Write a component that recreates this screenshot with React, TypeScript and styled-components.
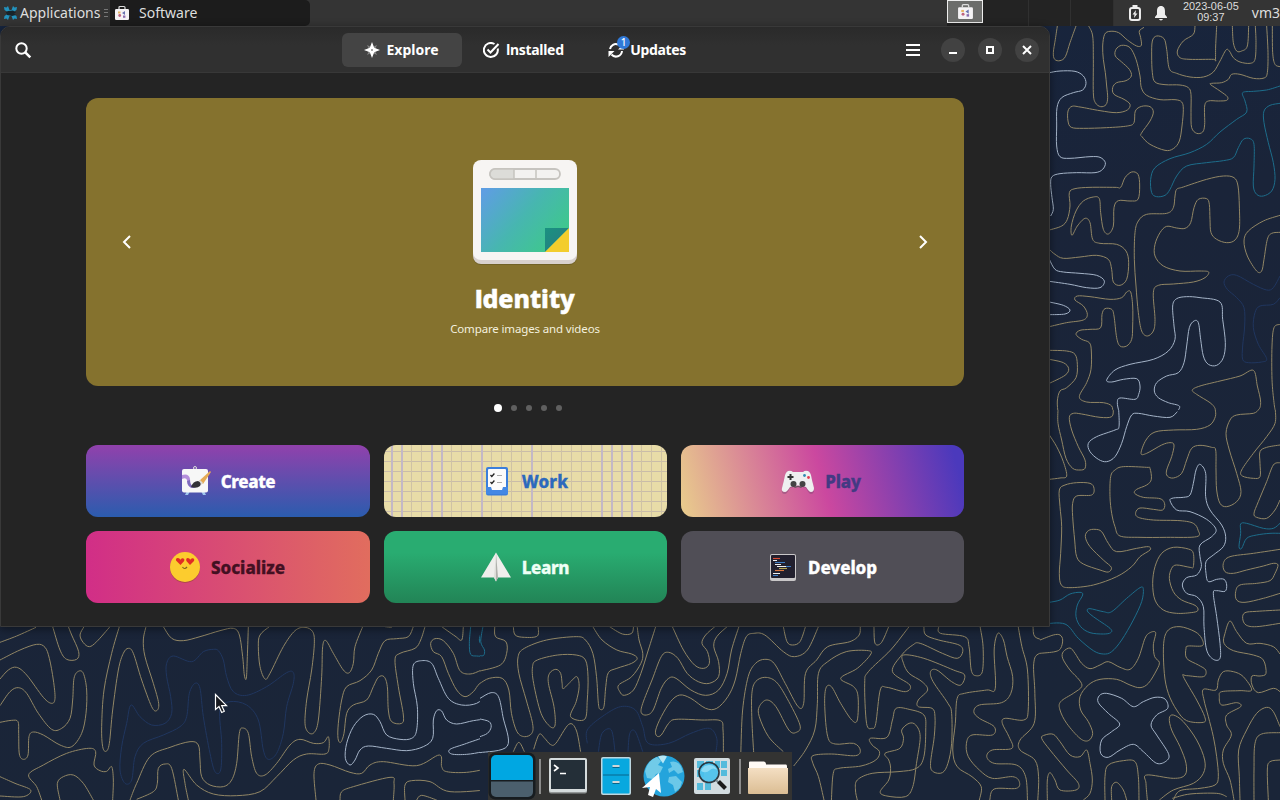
import React from "react";
import styled, { createGlobalStyle } from "styled-components";

const Global = createGlobalStyle`
  * { box-sizing: border-box; }
  html, body { margin: 0; padding: 0; background: #1a2439; overflow: hidden; }
  body { font-family: "Noto Sans", "Open Sans", sans-serif; }
`;

/* ---------- Wallpaper ---------- */

type Tone = "gold" | "white" | "teal" | "blue";
const tones: Record<Tone, string> = {
  gold: "#918665",
  white: "#a5b4c8",
  teal: "#1d6d8b",
  blue: "#20365f",
};

interface Region {
  x: number;
  y: number;
  width: number;
  height: number;
  scaleX: number;
  scaleY: number;
  lines: Partial<Record<Tone, string[]>>;
}

const regions: Region[] = [
  {
    x: 1040, y: 26, width: 240, height: 384, scaleX: 3, scaleY: 3,
    lines: {
      gold: [
        "52,0 46,40 40,80 44,100 60,104 76,92 90,50 108,0",
        "146,0 158,30 160,100 160,200 166,230 182,242 198,236 203,215 200,180 196,140 190,100 188,60 194,25 210,16 236,20 262,42 290,60 304,58 302,35 298,15 312,4",
        "245,58 228,70 226,90 245,108 268,130 274,150 258,164 230,170 218,185 222,205 252,220 270,235 262,252 230,260 180,254 120,243 96,241 84,255 84,285 94,304 130,307 200,305 262,300 282,290 286,255 305,241 330,242 340,258 330,285 304,322 306,332 330,355 375,373 400,368 418,345 426,300 430,250 425,228 405,221 360,221 320,208 304,185 300,150 288,100 270,65 245,58",
        "680,0 684,80 682,140 672,156 640,157 600,145 575,145 565,160 545,170 515,172 512,176 540,195 562,212 560,223 535,225 505,225 494,240 494,295 488,318 470,322 455,305 453,260 453,205 445,185 420,177 375,176 345,168 337,140 335,90 337,45 350,30 372,38 380,70 388,128 410,142 450,153 490,153 520,138 540,105 558,72 568,75 580,95 600,108 630,112 645,100 648,50 646,0",
        "465,0 460,25 430,45 412,75 420,95 450,100 520,100 526,103 527,60 530,0",
        "577,0 580,50 590,75 605,75 622,60 626,0",
        "697,0 698,80 705,115 720,122",
        "28,612 65,600 82,580 90,540 88,500 105,488 150,484 225,484 242,484 255,455 275,438 294,445 299,480 294,520 270,525 235,524 222,545 220,600 205,624 190,610 182,560 178,518 160,513 130,525 108,555 94,600 96,628 112,600 135,577 150,590 158,640 180,652 230,655 258,675 266,710 260,760 240,778 220,768 215,730 205,700 170,688 120,693 70,697 45,685 28,670",
        "28,902 80,890 130,882 142,865 130,840 105,822 112,810 150,812 210,820 245,815 260,798 272,798 278,840 278,900 275,940 260,960 240,960 230,935 222,870 215,850 195,848 186,865 182,905 150,910 120,913 108,925 125,940 148,950 154,975 153,1030 140,1070 118,1112 140,1128 190,1130 215,1140 218,1160",
        "28,973 80,975 105,985 112,1015 108,1055 80,1085 60,1095 52,1125 54,1160",
        "28,1000 70,1010 86,1028 75,1048 28,1072",
        "320,565 295,585 285,620 283,700 288,780 295,860 305,915 322,930 340,915 345,880 340,800 355,778 400,774 460,768 495,755 506,738 480,735 420,735 370,720 345,690 345,655 360,620 380,601 410,606 435,607 452,590 462,545 475,520 500,518 508,535 510,580 513,620 530,640 560,650 585,642 598,610 598,540 594,480 582,455 550,450 500,460 430,483 410,490 405,510 400,545 380,562 320,565",
        "720,568 670,585 625,615 612,645 622,690 650,735 665,735 672,700 682,640 695,622 720,619",
        "720,895 702,905 696,960 696,1060 702,1130 706,1155",
        "526,1155 524,1145 510,1130 470,1105 457,1092 480,1080 540,1065 600,1050 640,1033 652,1080 662,1130 650,1155 600,1163",
      ],
      white: [
        "28,140 60,135 105,136 130,150 138,172 128,192 100,200 65,215 51,245 50,300 50,360 60,392 90,397 150,392 180,394 196,410 188,430 165,440 110,440 60,443 36,452 32,475 36,515 40,550 32,570",
        "28,700 45,730 70,738 120,742 170,748 193,765 180,785 140,785 90,775 28,766",
        "28,828 70,838 90,852 75,864 28,866",
        "236,1154 232,1130 240,1116 285,1120 296,1105 300,1080 290,1058 250,1060 215,1068 200,1062 225,1032 270,1015 340,1000 385,975 405,940 402,900 398,840 410,818 440,812 480,815 540,828 548,880 556,950 550,995 530,1018 505,1015 490,990 482,940 475,890 462,885 448,905 440,960 432,1010 415,1040 380,1050 350,1070 343,1095 355,1115 385,1130 418,1140 412,1157",
      ],
      teal: [
        "720,180 680,192 640,196 608,200 615,225 620,258 590,280 540,318 500,355 450,380 390,398 345,425 332,460 335,500 350,512 375,508 390,490 410,450 440,420 500,410 550,404 580,395 595,365 610,340 630,338 642,355 642,420 640,480 650,505 670,510 695,495 705,460 700,410 685,350 672,290 672,255 690,238 720,232",
      ],
      blue: [
        "720,750 700,785 680,792 640,775 590,748 565,750 552,768 562,790 590,815 612,845 614,900 608,960 608,1000 625,1010 665,1008 680,998 655,955 640,905 645,860 660,840 700,835 720,815",
      ],
    },
  },
  {
    x: 1040, y: 410, width: 240, height: 390, scaleX: 3, scaleY: 3,
    lines: {
      gold: [
        "220,-2 215,20 180,22 125,12 100,10 88,22 95,60 115,110 135,150 135,175 120,180 98,175 78,145 65,90 54,40 54,-2",
        "28,75 50,110 70,155 80,198 60,204 28,208",
        "526,0 526,20 510,45 470,58 400,60 345,66 318,90 303,130 320,130 365,105 390,98 402,105 395,140 380,180 382,198 400,204 425,190 440,150 455,115 480,106 515,112 527,120 528,180 530,240 540,280 560,290 590,275 603,245 590,190 568,120 558,70 570,30 590,15 640,10 655,0",
        "706,0 705,40 680,80 640,130 605,180 607,198 640,205 660,200 660,160 660,125 680,112 720,105",
        "720,158 700,165 680,215 655,275 642,310 650,322 680,325 705,300 720,270",
        "250,170 225,180 212,200 210,260 215,310 225,350 240,378 300,382 380,382 470,380 474,360 460,340 420,332 340,330 295,322 287,308 300,294 340,298 368,300 374,282 360,266 310,262 284,250 290,238 320,225 334,208 330,175 320,172 250,170",
        "110,218 75,225 58,240 60,290 65,350 62,430 58,490 64,525 90,533 160,525 230,500 275,470 300,440 330,420 325,410 290,415 230,425 205,400 185,365 165,358 145,362 136,380 150,410 190,450 214,472 205,486 180,480 130,462 110,440 104,390 98,320 98,280 110,258 155,255 162,235 150,220 110,218",
        "720,418 640,430 570,440 550,460 555,485 580,490 620,480 670,468 700,460 714,465 705,490 690,512 650,520 600,525 587,545 590,570 615,577 670,565 720,550",
        "720,600 650,604 615,608 608,625 618,645 650,650 720,640",
        "400,412 365,430 345,470 338,520 345,570 370,600 410,610 460,607 474,600 465,586 425,570 400,545 388,505 395,475 410,465 450,472 460,470 460,430 445,417 400,412",
        "0,690 40,675 60,675 68,690 62,715 45,725 0,730",
        "90,714 70,725 68,745 90,780 118,810 125,830 100,850 62,875 60,900 80,940 120,985 145,992 158,970 145,935 122,900 120,860 145,825 180,808 230,808 270,825 300,833 325,820 350,780 358,757 344,740 340,705 347,668 330,668 315,685 295,745 270,778 240,772 205,755 180,765 150,776 125,760 105,730 90,714",
        "420,650 385,660 371,700 373,790 385,850 410,900 440,932 490,937 494,920 470,870 430,800 440,797 490,800 497,780 475,765 440,745 438,715 445,708 487,707 485,685 465,665 420,650",
        "720,845 700,835 655,848 636,825 636,798 660,798 678,790 670,750 640,735 580,722 552,700 555,670 570,633 590,665 620,700 660,700 700,710 720,732",
        "400,1170 420,1142 480,1135 525,1125 535,1100 530,1040 520,980 505,920 492,870 490,838 528,840 535,810 550,785 580,785 610,800 635,840 600,842 545,845 538,860 545,885 590,878 602,890 560,915 560,945 574,975 550,1020 550,1060 570,1110 582,1170",
        "600,1170 598,1100 596,1020 620,960 650,910 680,892 700,905 720,950",
        "642,1170 642,1080 645,1000 665,972 720,968",
        "685,1170 682,1080 690,1055 720,1050",
        "322,1170 318,1120 320,1095 400,1105 435,1095 438,1060 420,1010 395,960 388,925 400,915 430,935 470,990 494,1050 490,1090 460,1120 400,1140 358,1170",
        "22,1170 22,1110 30,1088 45,1110 60,1140 108,1140 115,1120 80,1080 30,1020 5,985 15,975 40,973 60,995 90,1035 120,1040 140,1020 150,1060 157,1110 150,1150 130,1170",
        "195,1170 195,1100 205,1065 250,1052 285,1055 295,1100 297,1170",
        "215,1170 215,1130 230,1117 250,1140 260,1170",
        "397,1165 450,1152 530,1150 560,1160",
      ],
      white: [
        "236,-2 237,50 225,60 170,80 145,100 150,125 175,148 200,155 225,140 245,100 260,50 275,15 295,10 340,18 390,22 412,5",
        "480,163 468,180 460,220 450,255 430,262 400,264 390,272 410,300 450,305 500,328 528,358 515,380 480,405 480,440 484,470 470,495 440,503 427,525 440,550 470,560 490,590 492,650 500,720 520,748 540,745 540,700 530,620 520,550 530,542 555,544 560,525 552,508 530,508 505,515 498,490 498,455 520,435 550,410 557,380 545,345 510,300 497,260 497,190 480,163",
        "200,850 178,857 175,878 205,910 239,942 215,965 185,990 182,1030 205,1042 240,1020 280,1003 310,1025 350,1060 380,1052 385,1030 350,975 333,945 350,915 383,895 375,867 345,862 310,875 280,890 245,865 200,850",
      ],
      teal: [
        "720,340 700,355 670,355 620,340 602,342 602,370 597,410 605,415 620,385 650,375 690,370 720,370",
        "28,577 60,570 90,552 120,547 128,555 112,585 108,620 122,650 150,668 190,672 212,668 210,655 160,620 142,603 150,596 190,605 215,605 260,565 300,533 310,538 305,575 280,630 245,690 215,725 190,732 160,722 115,685 75,642 10,642",
      ],
    },
  },
  {
    x: 0, y: 610, width: 480, height: 190, scaleX: 3, scaleY: 3,
    lines: {
      gold: [
        "0,97 50,78 108,52",
        "0,150 60,120 110,103 135,112 148,145 160,210 165,265 155,280 130,262 80,195 50,172 25,180 0,207",
        "0,287 30,245 55,233 80,250 115,310 155,358 185,355 210,325 218,270 222,205 235,184 250,190 260,240 258,310 245,370 215,410 180,405 130,375 100,366 87,380 84,435 70,448 58,432 56,370 54,335 35,331 0,337",
        "158,50 180,120 200,148 230,148 236,125 215,75 205,50",
        "252,50 240,75 250,98 268,110 290,95 330,50",
        "358,50 335,130 312,240 305,350 308,410 318,424 328,400 338,300 355,180 370,130 385,115 400,130 425,210 455,290 470,302 476,280 460,220 435,140 430,90 438,50",
        "490,50 515,85 550,92 600,80 660,62 700,55 718,75 728,140 733,195 739,205 742,140 745,50",
        "808,50 780,75 775,110 780,170 795,207 810,190 850,110 885,62 915,52 938,65 943,100 935,180 920,270 915,340 925,367 942,368 955,330 965,200 968,110 978,92 1000,130 1030,180 1048,188 1060,160 1065,110 1088,50",
        "1155,50 1175,52",
        "1240,50 1225,80 1190,86 1155,92 1135,130 1115,180 1080,212 1040,230 1025,270 1015,340 1014,385 1022,397 1032,370 1040,310 1060,285 1100,270 1120,230 1135,202 1152,200 1162,230 1165,300 1175,335 1205,340 1210,315 1195,230 1185,150 1200,130 1245,115 1262,90 1275,50",
        "1325,50 1365,78 1385,90 1390,50",
        "1500,155 1445,180 1410,192 1380,182 1360,130 1330,92 1305,86 1292,100 1300,125 1325,140 1345,190 1370,240 1395,260 1420,245 1440,220 1480,202 1508,205",
        "125,570 110,530 86,494 130,465 200,430 265,415 287,425 282,465 300,482 320,484 335,470 340,510 338,570",
        "180,570 172,520 190,500 220,495 250,520 280,570",
        "0,500 45,520 92,540 70,560 0,558",
        "390,570 410,520 450,440 510,412 570,395 595,405 600,450 605,500 630,525 670,530 695,510 710,460 718,370 728,354 745,370 755,440 770,490 795,495 830,460 870,405 900,388 940,400 970,398 985,380 987,415 975,432 920,432 880,450 830,500 780,545 710,557 640,552 590,525 552,478 555,520 565,570",
        "410,568 460,545 472,520 475,475 495,462 515,475 535,570",
        "948,570 942,490 955,462 990,465 1050,487 1085,490 1110,465 1150,455 1250,467 1318,435 1325,470 1340,485 1400,487 1470,475",
        "1020,570 1025,545 1060,530 1170,502 1182,520 1180,570",
        "1215,570 1215,525 1235,512 1290,515 1350,545 1480,538",
        "1250,570 1265,556 1310,570",
      ],
      white: [
        "1500,255 1480,245 1460,255 1430,280 1385,285 1345,265 1315,205 1295,160 1265,152 1240,165 1240,220 1252,290 1250,360 1235,385 1200,388 1160,375 1140,335 1120,313 1090,318 1060,350 1040,400 1036,445 1050,465 1065,450 1080,420 1105,408 1160,415 1220,422 1270,410 1298,385 1300,330 1310,302 1325,303 1340,330 1370,342 1420,332 1455,330 1475,350 1465,375 1400,400 1350,418 1355,432 1400,433 1450,425 1520,410",
      ],
      teal: ["1412,50 1408,100 1412,133 1430,138 1452,136 1450,115 1438,90 1450,50"],
      blue: [
        "640,118 610,125 575,155 520,138 500,160 500,200 512,260 515,310 495,340 455,345 420,320 393,285 380,340 365,410 360,480 375,520 395,510 405,440 430,400 490,375 540,350 560,320 568,250 585,220 600,235 610,320 630,430 645,485 662,480 665,400 660,300 690,275 740,285 775,330 790,420 805,448 830,430 850,370 860,290 880,220 880,188 860,188 800,230 740,256 700,245 680,200 670,150 655,122 640,118",
      ],
    },
  },
  {
    x: 480, y: 610, width: 560, height: 190, scaleX: 2.7034, scaleY: 3,
    lines: {
      gold: [
        "40,48 42,80 70,95 72,130 55,165 0,183",
        "90,48 95,75 120,82 155,78 157,48",
        "0,220 25,205 60,205 78,240 85,310 100,365 120,380 140,370 142,340 125,270 105,190 103,140 120,115 180,90 260,80 285,90 305,130 315,200 320,280 325,298 335,290 340,230 347,188 370,175 410,160 425,145 410,132 370,120 330,90 305,50",
        "245,320 283,328 290,270 292,200 285,150 260,135 210,135 155,150 142,170 145,220 165,310 190,350 203,345 200,290 185,220 188,190 205,178 218,190 222,220 225,236 245,215 262,200 268,230 260,275 245,320",
        "350,50 385,72 410,70 415,50",
        "425,50 430,90 440,130 435,160 410,200 375,225 378,245 390,256 415,240 435,190 455,120 475,50",
        "520,50 550,120 580,165 605,175 620,160 615,125 600,100 610,75 635,50",
        "668,50 640,80 632,110 645,155 645,200 620,220 590,215 560,190 535,145 510,127 490,140 465,210 440,280 436,308 450,315 468,300 490,235 510,205 530,205 570,240 610,256 645,240 668,190 680,120 700,50",
        "915,50 885,120 850,140 820,125 770,75 740,70 720,80 705,130 690,210 670,260 640,295 610,295 570,265 540,255 515,275 490,320 475,360 478,378 490,375 510,340 530,328 600,330 650,332 657,360 658,430",
        "820,50 830,95 845,105 865,95 880,50",
        "705,430 710,300 725,200 745,160 770,148 795,160 825,220 860,290 875,280 880,190 910,150 940,110 1000,95 1025,75 1028,50",
        "740,430 735,330 735,250 745,215 770,202 800,215 830,265 865,345 855,367 835,360 800,290 775,270 755,290 755,320 780,380 820,425",
        "848,468 880,420 905,360 912,280 915,190 940,155 990,125 1050,122 1055,135 1020,175 975,205 1010,230 1022,260 1020,330 1005,330 975,280 950,230 935,235 932,290 940,380 960,402 1010,400 1028,420 1015,437 950,432 900,437 900,460 915,500 930,570",
        "1160,50 1110,120 1050,185 1040,220 1045,340 1060,355 1070,340 1082,240 1100,232 1150,245 1162,225 1115,185 1140,135 1170,105 1190,100 1250,130 1290,145 1305,125 1295,105 1240,90 1205,75 1200,50",
        "1065,50 1068,100 1085,98 1105,50",
        "1240,50 1245,70 1310,80 1322,110 1328,180 1340,197 1358,185 1360,110 1352,50",
        "1145,135 1200,145 1280,180 1310,195 1300,225 1275,215 1235,180 1218,185 1225,215 1265,280 1275,310 1275,400 1265,460 1250,488 1225,485 1218,460 1228,380 1230,320 1222,295 1185,290 1185,270 1210,240 1195,215 1160,190 1145,160 1145,135",
        "950,570 955,490 970,475 1030,468 1070,450 1080,425 1060,405 1055,385 1100,382 1115,330 1125,295 1160,298 1200,315 1205,360 1200,440 1180,475 1130,485 1060,490 1020,510 1015,540 1020,570",
        "1160,340 1140,360 1145,385 1135,415 1095,430 1105,450 1110,475 1105,510 1082,545 1100,558 1150,560 1170,530 1180,460 1190,380 1178,345 1160,340",
        "1350,570 1355,530 1330,500 1290,470 1278,420 1285,340 1290,265 1310,250 1370,240 1393,235 1390,120 1400,70 1415,90 1425,140 1440,200 1435,250 1410,278 1350,285 1335,305 1350,325 1390,350 1385,375 1330,375 1315,400 1320,440 1350,480 1385,505 1440,500 1458,515 1450,535 1390,537 1378,570",
        "1480,570 1475,500 1450,465 1390,460 1370,440 1385,420 1438,415 1430,380 1412,340 1420,325 1470,330 1482,300 1480,180 1465,110 1455,50",
        "1568,122 1513,130 1497,160 1500,250 1498,340 1460,390 1460,420 1500,450 1510,500 1508,570",
        "1495,50 1500,80 1530,90 1568,85",
        "90,425 105,397 120,425",
        "145,418 160,373 175,385 190,403 205,400 240,343 260,360 272,425",
      ],
      white: [
        "0,265 30,248 50,260 62,320 74,408 0,428",
        "0,327 25,335 30,352 20,370 0,380",
      ],
      teal: ["8,50 2,95 12,120 10,136 0,137"],
      blue: [
        "290,400 290,360 330,320 380,290 420,300 440,350 455,400 510,400 570,370 620,355 640,385 638,425",
        "320,425 330,370 355,360 365,425",
        "400,425 405,370 420,365 440,425",
      ],
    },
  },
];

/* Catmull-Rom spline through "x,y x,y ..." points; closes when the ends meet. */
function smooth(source: string): string {
  const p = source.split(" ").map((pair) => pair.split(",").map(Number));
  const last = p.length - 1;
  const closed = p[0][0] === p[last][0] && p[0][1] === p[last][1];
  let d = `M${p[0][0]} ${p[0][1]}`;
  for (let i = 0; i < last; i++) {
    const a = i > 0 ? p[i - 1] : closed ? p[last - 1] : p[0];
    const b = p[i];
    const c = p[i + 1];
    const e = i + 2 <= last ? p[i + 2] : closed ? p[1] : c;
    const k = 6;
    d += `C${b[0] + (c[0] - a[0]) / k} ${b[1] + (c[1] - a[1]) / k} ${c[0] - (e[0] - b[0]) / k} ${c[1] - (e[1] - b[1]) / k} ${c[0]} ${c[1]}`;
  }
  return d;
}

const WallpaperSvg = styled.svg`
  position: absolute;
  inset: 0;
`;

const Wallpaper = () => (
  <WallpaperSvg width="1280" height="800" viewBox="0 0 1280 800" fill="none">
    <defs>
      <linearGradient id="night" x1="0" y1="0" x2="0.2" y2="1">
        <stop offset="0" stopColor="#16253f" />
        <stop offset="0.4" stopColor="#1a2439" />
        <stop offset="1" stopColor="#1a2538" />
      </linearGradient>
      {regions.map((r, i) => (
        <clipPath key={i} id={`region-${i}`}>
          <rect x={r.x} y={r.y} width={r.width} height={r.height} />
        </clipPath>
      ))}
    </defs>
    <rect width="1280" height="800" fill="url(#night)" />
    {regions.map((r, i) => (
      <g key={i} clipPath={`url(#region-${i})`}>
        <g transform={`translate(${r.x} ${r.y}) scale(${1 / r.scaleX} ${1 / r.scaleY})`}>
          {(Object.keys(r.lines) as Tone[]).map((tone) => (
            <g key={tone} stroke={tones[tone]}>
              {r.lines[tone]!.map((line) => (
                <path key={line} d={smooth(line)} strokeWidth="1" vectorEffect="non-scaling-stroke" />
              ))}
            </g>
          ))}
        </g>
      </g>
    ))}
  </WallpaperSvg>
);

/* ---------- Desktop and top panel ---------- */

const Desktop = styled.main`
  position: relative;
  width: 1280px;
  height: 800px;
  overflow: hidden;
  display: flex;
  flex-direction: column;
`;

const Panel = styled.header`
  position: relative;
  display: flex;
  align-items: stretch;
  height: 26px;
  background: #343434;
  color: #dedede;
  font-size: 14px;
  overflow: hidden;
  white-space: nowrap;
`;

const AppMenu = styled.div`
  display: flex;
  align-items: center;
  gap: 2px;
  width: 110px;
  padding-left: 3px;
`;

const PanelText = styled.span`
  line-height: 26px;
`;

const Grip = styled.span`
  width: 4px;
  height: 8px;
  margin-left: 2px;
  border-top: 1px solid #777;
  border-bottom: 1px solid #777;
  background: linear-gradient(transparent 2px, #777 2px, #777 3px, transparent 3px);
`;

const TaskButton = styled.div`
  display: flex;
  align-items: center;
  gap: 9px;
  width: 200px;
  padding-left: 4px;
  background: #1c1c1c;
  border-radius: 0 5px 5px 0;
`;

const Spacer = styled.div`
  flex: 1;
`;

const Pager = styled.div`
  display: flex;
  width: 167px;
  background: #232323;
`;

const Workspace = styled.div<{ $active?: boolean }>`
  flex: ${(p) => (p.$active ? "0 0 36px" : "1")};
  height: ${(p) => (p.$active ? "23px" : "26px")};
  margin-right: ${(p) => (p.$active ? "3px" : "0")};
  display: flex;
  align-items: center;
  justify-content: center;
  border: ${(p) => (p.$active ? "1px solid #eee" : "0")};
  border-right: ${(p) => (p.$active ? "1px solid #eee" : "1px solid #303030")};
  background: ${(p) => (p.$active ? "#6c6d6b" : "transparent")};
`;

const Tray = styled.div`
  display: flex;
  align-items: center;
  width: 166px;
  padding-left: 14px;
  gap: 12px;
`;

const Clock = styled.div`
  width: 58px;
  margin-left: 2px;
  text-align: center;
  font: 10.9px/11px "Liberation Sans", Arial, sans-serif;
  padding-bottom: 3px;
`;

/* ---------- Software window ---------- */

const Window = styled.section`
  position: relative;
  width: 1050px;
  height: 601px;
  background: #242424;
  border: 1px solid #393939;
  border-radius: 10px 10px 0 0;
  box-shadow: 0 2px 8px rgba(0, 0, 0, 0.45);
  display: flex;
  flex-direction: column;
  overflow: hidden;
`;

const HeaderBar = styled.div`
  display: grid;
  grid-template-columns: 1fr auto 1fr;
  align-items: center;
  height: 46px;
  flex: none;
  background: linear-gradient(#2a2a2a, #303030 40%);
  border-bottom: 1px solid #383838;
  color: #fff;
`;

const HeaderStart = styled.div`
  padding-left: 13px;
  display: flex;
`;

const Switcher = styled.nav`
  display: flex;
  gap: 2px;
`;

const Tab = styled.button<{ $active?: boolean; $track?: number; $width?: number }>`
  display: flex;
  align-items: center;
  justify-content: center;
  gap: 6px;
  width: ${(p) => p.$width ?? 120}px;
  height: 34px;
  padding: 0;
  border: 0;
  border-radius: 6px;
  color: #fff;
  background: ${(p) => (p.$active ? "#444" : "transparent")};
  font: 700 14px "Noto Sans", sans-serif;
  letter-spacing: ${(p) => p.$track ?? 0}px;
`;

/* The heavy capital I has slab serifs; a plain-stemmed face replaces the initial. */
const TabLabel = styled.span<{ $plainInitial?: boolean }>`
  display: block;
  &::first-letter {
    font-family: ${(p) => (p.$plainInitial ? '"Inter"' : '"Noto Sans"')}, sans-serif;
  }
`;

const UpdateIcon = styled.span`
  position: relative;
  display: flex;
`;

const CountBadge = styled.span`
  position: absolute;
  top: -6px;
  left: 9px;
  width: 13px;
  height: 13px;
  border-radius: 50%;
  background: #3079d8;
  font: 500 10px/13px "Noto Sans", sans-serif;
  letter-spacing: 0;
  text-align: center;
`;

const HeaderEnd = styled.div`
  display: flex;
  align-items: center;
  justify-content: flex-end;
  gap: 13px;
  padding-right: 10px;
`;

const MenuButton = styled.div`
  display: flex;
  margin-right: 7px;
`;

const WindowButton = styled.button`
  display: flex;
  align-items: center;
  justify-content: center;
  width: 24px;
  height: 24px;
  padding: 0;
  border: 0;
  border-radius: 50%;
  background: #424242;
`;

const Content = styled.div`
  width: 878px;
  margin: 25px auto 0;
  display: flex;
  flex-direction: column;
`;

const Featured = styled.article`
  display: flex;
  align-items: center;
  justify-content: space-between;
  height: 288px;
  padding: 0 34px;
  border-radius: 12px;
  background: #85722e;
  color: #fff;
`;

const FeaturedBody = styled.div`
  display: flex;
  flex-direction: column;
  align-items: center;
  padding-top: 12px;
`;

const FeaturedTitle = styled.h1`
  margin: 12px 0 0;
  font: 800 25px/36px "Noto Sans", sans-serif;
  letter-spacing: 0;
  -webkit-text-stroke: 0.5px currentColor;
  &::first-letter {
    font-family: "Inter", sans-serif;
  }
`;

const FeaturedText = styled.p`
  margin: 3px 0 0;
  font-size: 11.5px;
  line-height: 18px;
  letter-spacing: -0.14px;
  color: #f3f0df;
`;

const Dots = styled.div`
  display: flex;
  justify-content: center;
  align-items: center;
  gap: 9px;
  height: 10px;
  margin: 17px 0 32px;
  padding-left: 5px;
`;

const Dot = styled.span<{ $active?: boolean }>`
  width: ${(p) => (p.$active ? 8 : 6)}px;
  height: ${(p) => (p.$active ? 8 : 6)}px;
  border-radius: 50%;
  background: ${(p) => (p.$active ? "#fff" : "#606060")};
`;

const Categories = styled.div`
  display: grid;
  grid-template-columns: 284px 283px 283px;
  grid-auto-rows: 72px;
  gap: 14px;
`;

const Category = styled.button<{ $bg: string; $ink: string; $track: number; $inset: number }>`
  display: flex;
  align-items: center;
  justify-content: center;
  gap: 10px;
  padding: 0 ${(p) => p.$inset}px 0 0;
  border: 0;
  border-radius: 12px;
  background: ${(p) => p.$bg};
  color: ${(p) => p.$ink};
  font: 800 17px "Noto Sans", sans-serif;
  letter-spacing: ${(p) => p.$track}px;
  -webkit-text-stroke: 0.3px currentColor;
`;

/* ---------- Dock ---------- */

const Dock = styled.footer`
  position: absolute;
  left: 488px;
  bottom: 0;
  width: 304px;
  height: 48px;
  display: flex;
  align-items: center;
  background: #333332;
`;

const DockItem = styled.div`
  width: 48px;
  height: 48px;
  display: flex;
  align-items: center;
  justify-content: center;
`;

const DockDivider = styled.span`
  width: 8px;
  height: 35px;
  background: linear-gradient(90deg, transparent 3px, #8b8b8b 3px, #8b8b8b 5px, transparent 5px);
`;

const Pointer = styled.svg`
  position: absolute;
  left: 214px;
  top: 693px;
`;

/* ---------- Icons ---------- */

const XfceIcon = () => (
  <svg width="15" height="16" viewBox="0 0 15 16">
    <path d="M1 2l2.500.500L5 1l1.500 4h2L10 1l1.500 1.500L14 2l-.5 3-3 2v2l3 2 .5 3-2.500-.500L10 15l-1.500-4h-2L5 15l-1.500-1.500L1 14l.500-3 3-2V7l-3-2z" fill="#2292bd" />
    <path d="M3 7l2-1 5-.500 3 2-2 1 2 1.500-4 1-5-1z" fill="#17242b" />
  </svg>
);

const BagIcon = ({ size = 16 }: { size?: number }) => (
  <svg width={size} height={size} viewBox="0 0 16 16">
    <path d="M5 4V2.600Q5 1.500 6 1.500h4q1 0 1 1.100V4" fill="none" stroke="#ddd" strokeWidth="1.200" />
    <rect x="1" y="4" width="14" height="11" rx="1.200" fill="#f5f3f5" />
    <path d="M4 6.500h2.500v2H4z" fill="#e8b765" />
    <circle cx="5.700" cy="10.500" r="1.400" fill="#bf657f" />
    <path d="M8 8l3-2v4z" fill="#6771af" />
    <path d="M9 10.500h2.400v2.300H9z" fill="#8a6cae" />
  </svg>
);

const BatteryIcon = () => (
  <svg width="14" height="16" viewBox="0 0 14 16">
    <path d="M4.500 1h5" stroke="#eee" strokeWidth="2" />
    <rect x="2" y="3" width="10" height="12" rx="2" fill="none" stroke="#eee" strokeWidth="2" />
    <path d="M8 5L4.500 9.500h2L6 13l3.500-4.500h-2z" fill="#eee" />
  </svg>
);

const BellIcon = () => (
  <svg width="14" height="16" viewBox="0 0 14 16">
    <path d="M7 1C4 1 3 3.500 3 6v3.500L1 12v1h12v-1l-2-2.500V6c0-2.500-1-5-4-5z M5 14h4q-.400 1.500-2 1.500T5 14z" fill="#eee" />
  </svg>
);

const SearchIcon = () => (
  <svg width="18" height="18" viewBox="0 0 18 18" fill="none" stroke="#fff" strokeWidth="2">
    <circle cx="7.500" cy="7.500" r="5.200" />
    <path d="M11.300 11.300l5 5" strokeWidth="2.600" />
  </svg>
);

const ExploreIcon = () => (
  <svg width="16" height="16" viewBox="0 0 16 16">
    <path d="M3 3l4 2h2l4-2-2 4v2l2 4-4-2H7l-4 2 2-4V7z" fill="#888" />
    <path fillRule="evenodd" d="M8 0l2.200 5.800L16 8l-5.800 2.200L8 16l-2.200-5.800L0 8l5.800-2.200zM8 7a1 1 0 100 2 1 1 0 000-2z" fill="#fff" />
  </svg>
);

const InstalledIcon = () => (
  <svg width="17" height="16" viewBox="0 0 17 16" fill="none" stroke="#fff" strokeWidth="2">
    <path d="M14.700 6.500A7 7 0 1 1 11.500 2" />
    <path d="M4.500 7.500l3 3L15.500 2" />
  </svg>
);

const RefreshIcon = () => (
  <svg width="16" height="16" viewBox="0 0 16 16" fill="none" stroke="#fff" strokeWidth="2">
    <path d="M2 7a6 6 0 0 1 8-4.500M14 9a6 6 0 0 1-10.500 3.500" />
    <path d="M0.500 9h6l-6 6z" fill="#fff" stroke="none" />
    <path d="M10 7.500h6V2z" fill="#fff" stroke="none" />
  </svg>
);

const Chevron = ({ flip }: { flip?: boolean }) => (
  <svg width="14" height="16" viewBox="0 0 14 16" fill="none" stroke="#fff" strokeWidth="2">
    <path d={flip ? "M4 2l6 6-6 6" : "M10 2L4 8l6 6"} />
  </svg>
);

const IdentityIcon = () => (
  <svg width="110" height="110" viewBox="0 0 110 110">
    <defs>
      <linearGradient id="picture" x1="0" y1="0.1" x2="1" y2="0.7">
        <stop offset="0" stopColor="#5e9ee2" />
        <stop offset="0.5" stopColor="#47b6b0" />
        <stop offset="1" stopColor="#3ec98a" />
      </linearGradient>
      <linearGradient id="fold" x1="0" y1="0" x2="1" y2="1">
        <stop offset="0" stopColor="#1a9180" />
        <stop offset="1" stopColor="#297a83" />
      </linearGradient>
    </defs>
    <rect x="3" y="4" width="104" height="103" rx="8" fill="#5d5122" opacity=".5" />
    <rect x="3" y="6" width="104" height="100" rx="8" fill="#d8d1ce" />
    <rect x="3" y="2" width="104" height="100" rx="8" fill="#f7f5f3" />
    <rect x="20" y="11" width="70" height="10" rx="5" fill="#f3f2f0" stroke="#c6c4bf" strokeWidth="1.800" />
    <path d="M44 11H25a5 5 0 0 0 0 10h19z" fill="#dcdcd8" stroke="#c6c4bf" strokeWidth="1.500" />
    <path d="M66 11v10" stroke="#c6c4bf" strokeWidth="1.500" />
    <path d="M11 30h88v64H11z" fill="url(#picture)" />
    <path d="M75 70h24L75 94z" fill="url(#fold)" />
    <path d="M99 70v24H75z" fill="#f3cd2c" />
  </svg>
);

const CreateIcon = () => (
  <svg width="32" height="32" viewBox="0 0 32 32">
    <circle cx="16" cy="3" r="1.500" fill="none" stroke="#ddd" />
    <path d="M8 26l-2 4h3l2-4M22 26l2 4h3l-2-4" fill="#9fc6ee" />
    <rect x="3" y="4" width="26" height="23.500" rx="2" fill="#f7f7f7" />
    <path d="M3 10q7-2 8 4 0 8 4 9-7 0-7-8-1-3-5-1z" fill="#b48edb" />
    <path d="M8 16q1 8 8 7l-2-3q-3 1-3-5z" fill="#7e6cbd" />
    <path d="M20 16L31 6l1 1-8 12z" fill="#e5aa55" />
    <path d="M21 15l3 3-2 2-3-3z" fill="#d9d9d9" />
    <path d="M12 22q2-6 7-6 4 2 2 5-3 3-9 1z" fill="#323237" />
  </svg>
);

const WorkIcon = () => (
  <svg width="30" height="32" viewBox="0 0 30 32">
    <rect x="4" y="2" width="22" height="28.500" rx="2" fill="#3a7edb" />
    <rect x="6" y="4" width="18" height="21" rx="1" fill="#fbfbfb" />
    <path d="M4 22h5l1 3h10l1-3h5v7H4z" fill="#4388e4" />
    <path d="M8.500 10l1.300 1.500 2.600-3M8.500 17l1.300 1.500 2.600-3" fill="none" stroke="#222" strokeWidth="1.300" />
    <path d="M15 10.500h5M15 17.500h5" stroke="#aaa" />
  </svg>
);

const PlayIcon = () => (
  <svg width="34" height="28" viewBox="0 0 34 28">
    <path d="M7 4q3-1 5 1h10q2-2 5-1 3 1 4 9l2 10q0 4-3 4-2 0-5-6-8-3-16 0-3 6-5 6-4 0-3-4L3 13Q4 5 7 4z" fill="#7b4a70" opacity=".45" />
    <path d="M7 4q3-1 5 1h10q2-2 5-1 3 1 4 9l2 8q0 4-3 4-2 0-5-5-8-3-16 0-3 5-5 5-4 0-3-4L3 13Q4 5 7 4z" fill="#efeff0" />
    <path d="M9.500 7v6M6.500 10h6" stroke="#333" strokeWidth="2" />
    <circle cx="12.500" cy="17" r="3" fill="#444" />
    <circle cx="21.500" cy="17" r="3" fill="#444" />
    <circle cx="23.500" cy="8.500" r="1.400" fill="#338ab0" />
    <circle cx="27.500" cy="10.500" r="1.400" fill="#e33c50" />
    <path d="M13.500 20.500q3.500-2 7 0" stroke="#555" fill="none" />
  </svg>
);

const SocialIcon = () => (
  <svg width="32" height="32" viewBox="0 0 32 32">
    <circle cx="16" cy="17" r="15" fill="#9c4a39" opacity=".7" />
    <circle cx="16" cy="16" r="15" fill="#fccc2e" />
    <path d="M11.500 14L7 9.600q-.500-2.800 2-2.600 1.700.200 2.300 1.700.800-1.700 2.600-1.500 2.200.500 1.100 3zM21 14l-3.600-4q-.800-2.800 1.500-3 1.600.100 2.300 1.700.800-1.600 2.500-1.500 2.200.400 1.300 2.800z" fill="#e12c24" />
    <path d="M13.500 16q2 3 4.500 0" fill="none" stroke="#806020" strokeWidth="1.200" />
  </svg>
);

const LearnIcon = () => (
  <svg width="32" height="32" viewBox="0 0 32 32">
    <path d="M16 1.500L31 26.500l-13 0-2 4-2-4-13 0z" fill="#efeeec" />
    <path d="M16 1.500V30.500l-2-4z" fill="#dddcd9" />
    <path d="M16 1.500V30.500l2-4z" fill="#b0b0ac" />
  </svg>
);

const DevelopIcon = () => (
  <svg width="30" height="30" viewBox="0 0 30 30">
    <rect x="2" y="2" width="26" height="27" rx="2" fill="#c9c7c8" />
    <rect x="3" y="3" width="24" height="23" rx="1" fill="#22202e" />
    <g strokeWidth="1.100" fill="none">
      <path d="M5 6.500h7" stroke="#dc4d35" />
      <path d="M5 8.500h4M7 12.500h6M9 14.500h9M5 21.500h7" stroke="#eee" />
      <path d="M7 10.500h10M18 14.500h5M5 23.500h5" stroke="#3e7dc5" />
      <path d="M11 16.500h8" stroke="#b8a651" />
      <path d="M7 18.500h9" stroke="#dd7840" />
    </g>
  </svg>
);

const ShowDesktopIcon = () => (
  <svg width="48" height="48" viewBox="0 0 48 48">
    <rect x="0.500" y="0.500" width="47" height="47" rx="7" fill="#171c20" />
    <path d="M3 28V8a5 5 0 0 1 5-5h32a5 5 0 0 1 5 5v20z" fill="#00a7e2" />
    <path d="M3 29.500h42V40a5 5 0 0 1-5 5H8a5 5 0 0 1-5-5z" fill="#4b5f6d" />
  </svg>
);

const TerminalIcon = () => (
  <svg width="40" height="40" viewBox="0 0 40 40">
    <rect x="1" y="3" width="38" height="34.500" rx="2" fill="#929696" />
    <rect x="1" y="2" width="38" height="34" rx="2" fill="#d5dbdc" />
    <rect x="3" y="4" width="34" height="29" fill="#242f38" />
    <path d="M6 9l4 3-4 3M12 17.500h6" fill="none" stroke="#fff" strokeWidth="1.600" />
  </svg>
);

const CabinetIcon = () => (
  <svg width="32" height="40" viewBox="0 0 32 40">
    <rect x="1" y="1" width="30" height="38" rx="2" fill="#bdd6df" />
    <rect x="2.500" y="2.500" width="27" height="35" rx="1" fill="#08a8df" />
    <path d="M3 19h26" stroke="#087da8" strokeWidth="1.500" />
    <path d="M12.500 10h7M12.500 26h7" stroke="#cfd6d8" strokeWidth="2" />
    <path d="M12.500 11.500h7M12.500 27.500h7" stroke="#08668b" />
  </svg>
);

const BrowserIcon = () => (
  <svg width="44" height="44" viewBox="0 0 44 44">
    <circle cx="22" cy="22" r="20.500" fill="#24a4dc" />
    <path d="M3 17q3-11 12-14l4 4-3 4 5 2-3 6-4 1-3 5-6-1z" fill="#71cbe8" />
    <path d="M28 8q7-2 11 4l2 6-5 2-4-4-5 3-1-4 4-2zM27 23l7-1 6 6-2 6-5 4-2-7-5-3z" fill="#6bc8e8" />
    <path d="M16 2.500q5-2 9 0l-4 7z" fill="#b7e7f5" />
    <path d="M17 19L0 34l8-1-2 8 5 2 3-8 5 4z" fill="#fff" />
  </svg>
);

const ImageSearchIcon = () => (
  <svg width="40" height="40" viewBox="0 0 40 40">
    <rect x="2" y="2" width="36" height="36" rx="2" fill="#d2dce0" />
    <path d="M5 5h7v7H5zm9 0h7v7h-7zm9 0h5v7h-5zm6 0h6v7h-6zM5 14h7v7H5zm24 0h6v6h-6zM5 27h6v7H5zm8 0h6v7h-6z" fill="#54bbdc" />
    <circle cx="17" cy="16.500" r="10" fill="#4cc2ee" opacity=".92" stroke="#222c34" strokeWidth="1.600" />
    <path d="M9 15q2-6 8-6 6 0 8 5-4-3-7 0-4 4-9 1z" fill="#8cdbf5" />
    <path d="M24 24l3 3" stroke="#7a898e" strokeWidth="2" />
    <path d="M26.500 25.500l7 7" stroke="#1b1b1b" strokeWidth="4" />
  </svg>
);

const FolderIcon = () => (
  <svg width="42" height="40" viewBox="0 0 42 40">
    <defs>
      <linearGradient id="folder" x1="0" y1="0" x2="0" y2="1">
        <stop stopColor="#f4dfc3" />
        <stop offset="1" stopColor="#dbbd93" />
      </linearGradient>
    </defs>
    <path d="M2 12V6.500q0-1 1-1h14q2 0 2 3h20q1 0 1 2v3H2z" fill="#fffaf5" />
    <path d="M1 12h40v25q0 1-1 1H2q-1 0-1-1z" fill="url(#folder)" />
  </svg>
);

/* ---------- Data ---------- */

const ruling = [7, 17, 47, 57, 97, 147, 217, 227, 237, 247]
  .map((x) => `linear-gradient(#c3b8c6, #c3b8c6) ${x}px 0 / 2px 100% no-repeat`)
  .join(", ");

const grid = `
  ${ruling},
  repeating-linear-gradient(90deg, transparent 0 7px, #cfc2a5 7px 8px, transparent 8px 10px),
  repeating-linear-gradient(180deg, transparent 0 6px, #c9bca9 6px 7px, transparent 7px 10px),
  #e8dca8`;

const categories = [
  { name: "Create", icon: <CreateIcon />, bg: "linear-gradient(#9141ac, #2b5cae)", ink: "#fff", track: -0.45, inset: 2 },
  { name: "Work", icon: <WorkIcon />, bg: grid, ink: "#2c69bd", track: 0.1, inset: 1 },
  { name: "Play", icon: <PlayIcon />, bg: "linear-gradient(75deg, #e9ce8c, #cb489f 50%, #4b39bc 96%)", ink: "#433a83", track: -0.2, inset: 3 },
  { name: "Socialize", icon: <SocialIcon />, bg: "linear-gradient(90deg, #d12e87, #e16d5e)", ink: "#431022", track: 0, inset: 2 },
  { name: "Learn", icon: <LearnIcon />, bg: "linear-gradient(#29ac71 30%, #228456)", ink: "#eefff5", track: -0.4, inset: 2 },
  { name: "Develop", icon: <DevelopIcon />, bg: "#504e56", ink: "#fff", track: -0.1, inset: 0 },
];

export default function App() {
  return (
    <Desktop>
      <Global />
      <Wallpaper />
      <Panel>
        <AppMenu>
          <XfceIcon />
          <PanelText>Applications</PanelText>
          <Grip />
        </AppMenu>
        <TaskButton>
          <BagIcon />
          <PanelText>Software</PanelText>
        </TaskButton>
        <Spacer />
        <Pager>
          <Workspace $active><BagIcon size={17} /></Workspace>
          <Workspace />
          <Workspace />
          <Workspace />
        </Pager>
        <Tray>
          <BatteryIcon />
          <BellIcon />
          <Clock>2023-06-05<br />09:37</Clock>
          <PanelText>vm3</PanelText>
        </Tray>
      </Panel>
      <Window>
        <HeaderBar>
          <HeaderStart><SearchIcon /></HeaderStart>
          <Switcher>
            <Tab $active><ExploreIcon /><TabLabel>Explore</TabLabel></Tab>
            <Tab $track={-0.3}><InstalledIcon /><TabLabel $plainInitial>Installed</TabLabel></Tab>
            <Tab $width={123} $track={-0.35}>
              <UpdateIcon><RefreshIcon /><CountBadge>1</CountBadge></UpdateIcon>
              <TabLabel>Updates</TabLabel>
            </Tab>
          </Switcher>
          <HeaderEnd>
            <MenuButton>
              <svg width="16" height="16" viewBox="0 0 16 16" stroke="#fff" strokeWidth="2"><path d="M1 3h14M1 8h14M1 13h14" /></svg>
            </MenuButton>
            <WindowButton aria-label="Minimize"><svg width="10" height="10" stroke="#fff" strokeWidth="2"><path d="M1 8h8" /></svg></WindowButton>
            <WindowButton aria-label="Maximize"><svg width="10" height="10" stroke="#fff" strokeWidth="2" fill="none"><path d="M2 2h6v6H2z" /></svg></WindowButton>
            <WindowButton aria-label="Close"><svg width="10" height="10" stroke="#fff" strokeWidth="2"><path d="M1 1l8 8M9 1l-8 8" /></svg></WindowButton>
          </HeaderEnd>
        </HeaderBar>
        <Content>
          <Featured>
            <Chevron />
            <FeaturedBody>
              <IdentityIcon />
              <FeaturedTitle>Identity</FeaturedTitle>
              <FeaturedText>Compare images and videos</FeaturedText>
            </FeaturedBody>
            <Chevron flip />
          </Featured>
          <Dots>
            <Dot $active /><Dot /><Dot /><Dot /><Dot />
          </Dots>
          <Categories>
            {categories.map((c) => (
              <Category key={c.name} $bg={c.bg} $ink={c.ink} $track={c.track} $inset={c.inset}>{c.icon}{c.name}</Category>
            ))}
          </Categories>
        </Content>
      </Window>
      <Dock>
        <DockItem><ShowDesktopIcon /></DockItem>
        <DockDivider />
        <DockItem><TerminalIcon /></DockItem>
        <DockItem><CabinetIcon /></DockItem>
        <DockItem><BrowserIcon /></DockItem>
        <DockItem><ImageSearchIcon /></DockItem>
        <DockDivider />
        <DockItem><FolderIcon /></DockItem>
      </Dock>
      <Pointer width="14" height="22" viewBox="0 0 14 22">
        <path d="M1.500 1.500v15l3.500-3 2.700 6 2.600-1.200-2.600-5.600h4.800z" fill="#17191f" stroke="#fff" strokeWidth="1.200" />
      </Pointer>
    </Desktop>
  );
}
